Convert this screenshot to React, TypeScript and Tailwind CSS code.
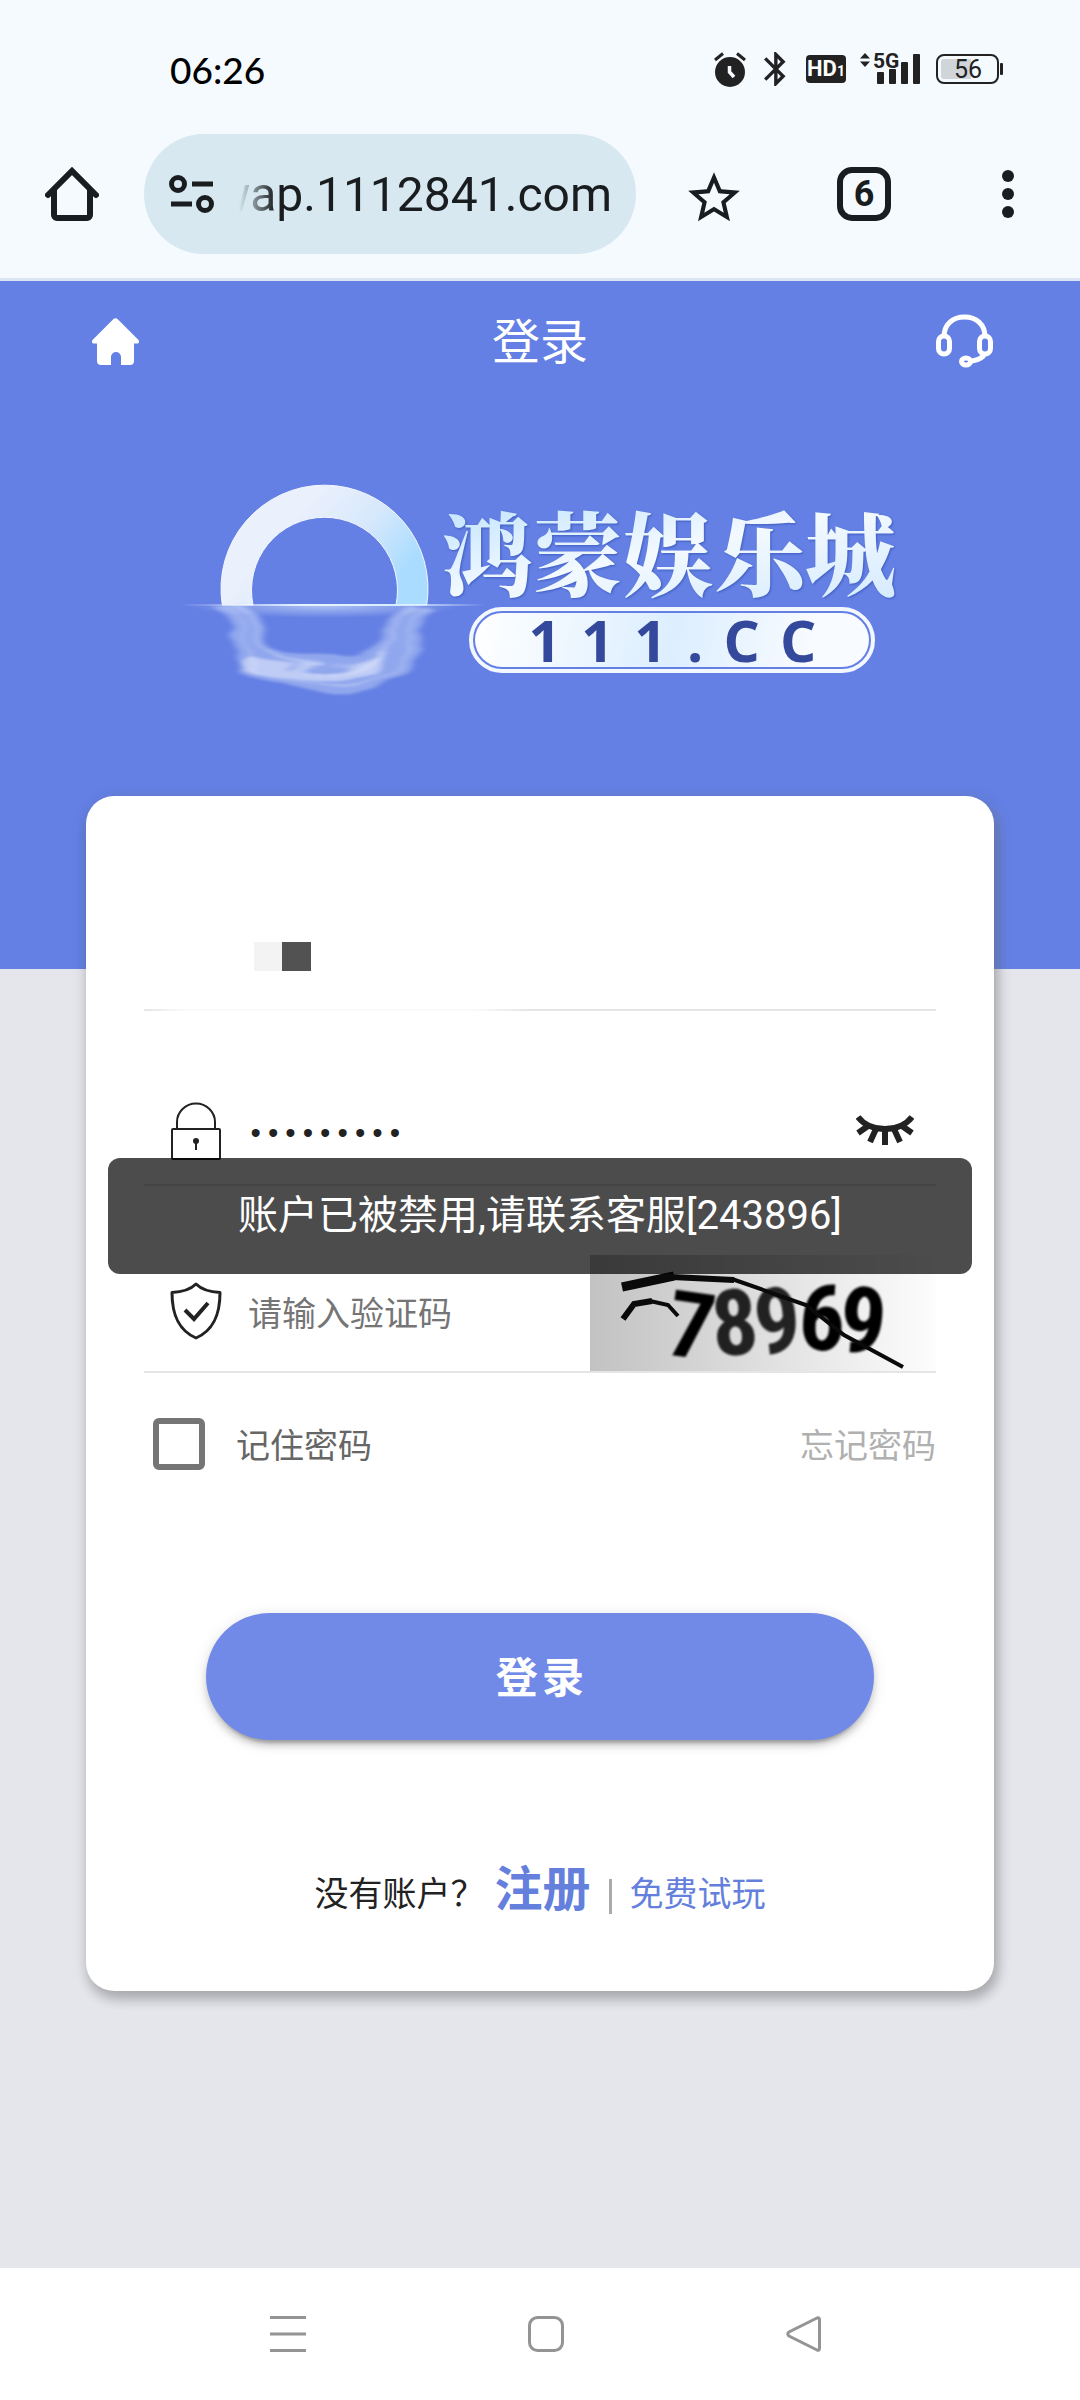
import { useState } from "react";
import { MdStarBorder } from "react-icons/md";

const SIGNAL_BARS = [
  { x: 17, h: 12 },
  { x: 29, h: 15 },
  { x: 41, h: 22 },
  { x: 53, h: 30 },
];

function StatusBar() {
  return (
    <div className="flex h-[134px] items-center justify-between pt-1 pr-[77px] pl-[170px] text-[#222]">
      <span className="font-['Lato',sans-serif] text-[37px] leading-none font-medium text-black">
        06:26
      </span>
      <div className="flex items-center">
        <svg width="32" height="35" viewBox="0 0 32 35" className="mr-[18px]">
          <circle cx="16" cy="20" r="15" fill="currentColor" />
          <path
            d="M1 8L9 1.500M31 8L23 1.500"
            stroke="currentColor"
            strokeWidth="3"
          />
          <path d="M15.500 14v6l4.500 5" stroke="#f5faff" strokeWidth="3.500" fill="none" />
        </svg>
        <svg width="22" height="34" viewBox="5 2 13 20" className="mr-5">
          <path
            fill="currentColor"
            d="M17.71 7.71L12 2h-1v7.59L6.410 5 5 6.410 10.590 12 5 17.590 6.410 19 11 14.410V22h1l5.710-5.710-4.300-4.290 4.300-4.290zM13 5.830l1.880 1.880L13 9.590V5.830zm1.880 10.460L13 18.170v-3.760l1.880 1.880z"
          />
        </svg>
        <span className="mr-3.5 flex h-7 w-10 items-baseline justify-center rounded-sm bg-[#222] font-['Liberation_Sans_Narrow','Roboto',sans-serif] text-[22px] leading-7 font-bold text-white">
          HD<span className="text-sm leading-none">1</span>
        </span>
        <svg width="61" height="38" viewBox="0 -4 61 38" className="mr-[15px] mb-1">
          <path d="M0 6.500L5 1l5 5.500zM0 9.500h10L5 15z" fill="currentColor" />
          <text
            x="13"
            y="16"
            fontSize="21"
            className="fill-current font-['Liberation_Sans_Narrow','Roboto'] font-bold"
          >
            5G
          </text>
          {SIGNAL_BARS.map((bar) => (
            <rect
              key={bar.x}
              x={bar.x}
              y={32 - bar.h}
              width="7"
              height={bar.h}
              rx="1"
              fill="currentColor"
            />
          ))}
        </svg>
        <svg width="67" height="30" viewBox="0 0 67 30">
          <rect x="1" y="1" width="61" height="28" rx="7" fill="none" stroke="currentColor" strokeWidth="2" />
          <path d="M35 5H8a3 3 0 0 0-3 3v14a3 3 0 0 0 3 3h27z" fill="#d0d5d9" />
          <rect x="64" y="9" width="3" height="12" rx="1" fill="currentColor" />
          <text x="32" y="24" fontSize="25" textAnchor="middle" className="fill-current font-['Roboto']">
            56
          </text>
        </svg>
      </div>
    </div>
  );
}

function BrowserBar() {
  return (
    <div className="flex items-center border-b-3 border-[#dbe4f4] pb-6 text-[#191d20]">
      <button aria-label="主页" className="flex w-36 shrink-0 justify-center">
        <svg width="54" height="54" viewBox="0 0 54 54" fill="none" stroke="currentColor" strokeWidth="6">
          <path d="M3 28L27 4l24 24" strokeLinecap="round" />
          <path d="M9 22v26a3 3 0 0 0 3 3h30a3 3 0 0 0 3-3V22" />
        </svg>
      </button>
      <div className="flex h-[120px] min-w-0 flex-1 items-center rounded-full bg-[#d7e8f0] pr-6 pl-[25px]">
        <svg
          width="46"
          height="40"
          viewBox="0 0 46 40"
          fill="none"
          stroke="currentColor"
          strokeWidth="5"
          className="shrink-0"
        >
          <circle cx="9" cy="10" r="6.500" />
          <path d="M23 10h21M2 30h21" />
          <circle cx="36" cy="30" r="6.500" />
        </svg>
        <div className="ml-6 flex min-w-0 flex-1 justify-end overflow-hidden pt-0.5 mask-[linear-gradient(to_right,transparent,black_36px)]">
          <span className="font-['Roboto',sans-serif] text-[48px] leading-[60px] whitespace-nowrap">
            wap.1112841.com
          </span>
        </div>
      </div>
      <button aria-label="收藏" className="flex w-[156px] shrink-0 justify-center pt-2">
        <MdStarBorder size={62} />
      </button>
      <button aria-label="标签页" className="flex w-36 shrink-0 justify-center">
        <span className="flex size-[54px] items-center justify-center rounded-[15px] border-6 border-current font-['Roboto',sans-serif] text-4xl leading-none font-bold">
          6
        </span>
      </button>
      <button aria-label="更多" className="flex w-36 shrink-0 flex-col items-center gap-1.5">
        <span className="size-3 rounded-full bg-current" />
        <span className="size-3 rounded-full bg-current" />
        <span className="size-3 rounded-full bg-current" />
      </button>
    </div>
  );
}

function Logo() {
  return (
    <div className="flex items-start justify-center pr-1">
      <svg width="305" height="220" viewBox="180 480 305 220" className="shrink-0">
        <defs>
          <linearGradient id="ring" x1="0" y1="0" x2="1" y2="0.500">
            <stop offset="0.400" stopColor="#eaf0fc" />
            <stop offset="0.700" stopColor="#d6e8fc" />
            <stop offset="1" stopColor="#a9dcff" />
          </linearGradient>
          <linearGradient id="waterline">
            <stop offset="0" stopColor="#fff" stopOpacity="0" />
            <stop offset="0.400" stopColor="#e8f4ff" />
            <stop offset="0.700" stopColor="#d6efff" />
            <stop offset="1" stopColor="#fff" stopOpacity="0" />
          </linearGradient>
          <radialGradient id="glow" cx="0.500" cy="0" r="0.500" gradientTransform="translate(0 0) scale(1 2)">
            <stop offset="0" stopColor="#dcebff" stopOpacity="0.600" />
            <stop offset="1" stopColor="#dcebff" stopOpacity="0" />
          </radialGradient>
          <filter id="ripple" x="-20%" y="-20%" width="140%" height="140%">
            <feTurbulence type="fractalNoise" baseFrequency="0.006 0.045" numOctaves="2" seed="7" />
            <feDisplacementMap in="SourceGraphic" scale="32" xChannelSelector="R" yChannelSelector="A" />
            <feGaussianBlur stdDeviation="3 1" />
          </filter>
        </defs>
        <path
          d="M222.300 604A103.500 103.500 0 1 1 426.700 604H396A73 73 0 1 0 253 604Z"
          fill="url(#ring)"
          stroke="#f4f8ff"
          strokeWidth="1"
        />
        <g filter="url(#ripple)" fill="none">
          <path d="M238 608C241 645 250 674 322 676S404 645 411 608" stroke="#bccdf7" strokeWidth="32" opacity="0.500" />
          <path d="M246 608C250 640 262 666 322 668S400 640 404 608" stroke="#e3ebfd" strokeWidth="2" opacity="0.500" />
          <path d="M234 608C237 650 246 680 322 684S408 650 418 608" stroke="#e3ebfd" strokeWidth="2" opacity="0.400" />
          <path d="M244 660C280 676 340 680 378 660" stroke="#edf2fe" strokeWidth="12" opacity="0.500" />
        </g>
        <rect x="190" y="605" width="270" height="12" fill="url(#glow)" />
        <rect x="180" y="603" width="305" height="2" fill="url(#waterline)" />
      </svg>
      <div className="mt-5 -ml-11 flex flex-col items-center">
        <h1 className="bg-linear-to-br from-[#bfe3ff] via-[#f3f9ff] to-[#d5ebff] bg-clip-text font-['Noto_Serif_CJK_SC','Noto_Sans_CJK_SC',serif] text-[91px] leading-[98px] font-black text-transparent drop-shadow-[1px_1px_1px_#3f5cc0]">
          鸿蒙娱乐城
        </h1>
        <div className="mt-2 ml-2 flex h-[66px] w-[406px] items-center rounded-full border-4 border-[#f3f8ff] p-0.5">
          <div className="flex h-full w-full items-center justify-between rounded-full bg-[linear-gradient(100deg,#fff,#dceeff_50%,#f8fbff_85%)] px-[53px] font-['Open_Sans',sans-serif] text-[57px] leading-none font-bold text-[#34489c]">
            {"111.CC".split("").map((char, i) => (
              <span key={i}>{char}</span>
            ))}
          </div>
        </div>
      </div>
    </div>
  );
}

function Hero() {
  return (
    <header className="bg-[#6480e4] pb-[268px] text-white">
      <div className="flex h-[120px] items-center justify-between px-[87px]">
        <a href="#home" aria-label="首页" className="flex w-[57px] justify-center">
          <svg width="47" height="47" viewBox="0 0 47 47">
            <path
              fill="currentColor"
              d="M21 1.500a3.500 3.500 0 0 1 5 0L46 21.500c2 2 1 4-1 4h-3V43a4 4 0 0 1-4 4H29V39a4.500 4.500 0 0 0-10 0v8H9a4 4 0 0 1-4-4V25.500H2c-2 0-3-2-1-4z"
            />
          </svg>
        </a>
        <span className="pt-1 text-5xl leading-none">登录</span>
        <a href="#service" aria-label="客服">
          <svg width="57" height="54" viewBox="0 0 57 54" fill="none" stroke="currentColor" strokeWidth="5">
            <path d="M8 23C8 10 17 3 28.500 3S49 10 49 23" />
            <rect x="2.500" y="22" width="11" height="18" rx="5.500" />
            <rect x="43.500" y="22" width="11" height="18" rx="5.500" />
            <path d="M49 39c-2 5-6 7-13 8" />
            <ellipse cx="30" cy="47.500" rx="4.500" ry="3.500" />
          </svg>
        </a>
      </div>
      <div className="pt-20">
        <Logo />
      </div>
    </header>
  );
}

function Captcha() {
  return (
    <svg
      width="346"
      height="116"
      viewBox="0 0 346 116"
      role="img"
      aria-label="验证码"
      className="shrink-0 bg-linear-to-r from-[#c2c2c2] to-[#fdfdfd]"
    >
      <filter id="soft">
        <feGaussianBlur stdDeviation="1" />
      </filter>
      <g
        filter="url(#soft)"
        fontSize="92"
        className="fill-black font-['Liberation_Sans_Narrow','Roboto_Condensed','Roboto'] font-bold"
      >
        <text x="78" y="102" transform="rotate(8 98 70)">7</text>
        <text x="121" y="100" transform="rotate(-5 144 65)" opacity="0.850">8</text>
        <text x="164" y="98" transform="rotate(-6 188 65)" opacity="0.850">9</text>
        <text x="209" y="95" transform="rotate(3 234 62)">6</text>
        <text x="250" y="98" transform="rotate(5 276 66)">9</text>
      </g>
      <g fill="none" stroke="#0a0a0a">
        <path d="M32 32L84 21" strokeWidth="9" />
        <path d="M82 22l62 3" strokeWidth="6" />
        <path d="M142 24l74 26 38 30 59 32" strokeWidth="4" />
        <path d="M33 64l11-15 18-3" strokeWidth="6" />
        <path d="M60 46l18 4 10 11" strokeWidth="4" />
      </g>
    </svg>
  );
}

function LoginCard() {
  const [password, setPassword] = useState("abc123456");
  const [showPassword, setShowPassword] = useState(false);
  const [captcha, setCaptcha] = useState("");
  const [remember, setRemember] = useState(false);

  return (
    <form
      onSubmit={(e) => e.preventDefault()}
      className="mx-[86px] -mt-[173px] rounded-[28px] bg-white px-[58px] pt-[111px] pb-[65px] text-[34px] leading-10 text-[#222] shadow-[4px_5px_12px_rgba(140,140,140,0.4),2px_9px_12px_rgba(0,0,0,0.14),2px_3px_20px_rgba(0,0,0,0.08)]"
    >
      {/* account name is masked */}
      <div>
        <div className="flex h-[102px] items-center pb-1 pl-[110px]">
          <span className="h-[29px] w-7 shrink-0 bg-[#f3f3f3]" />
          <span className="h-[29px] w-[29px] shrink-0 bg-[#525252]" />
          <input type="text" aria-label="用户名" className="h-full min-w-0 flex-1 outline-none" />
        </div>
        <div className="h-0.5 bg-[linear-gradient(to_right,#e5e5e5,#fafafa_40px,#fafafa_330px,#e5e5e5_385px)]" />
      </div>

      <div className="relative mt-[71px] flex h-[104px] items-center border-b-2 border-[#e5e5e5] pr-[22px] pl-[27px]">
        <svg width="50" height="58" viewBox="0 0 50 58" fill="none" stroke="currentColor" className="mb-1 shrink-0">
          <path d="M6 27V20a19 18.500 0 0 1 38 0v7" strokeWidth="2" />
          <rect x="1" y="27" width="48" height="30" rx="1" strokeWidth="2" />
          <circle cx="25" cy="39" r="3" fill="currentColor" stroke="none" />
          <path d="M25 40v8" strokeWidth="2" />
        </svg>
        <input
          type={showPassword ? "text" : "password"}
          aria-label="密码"
          value={password}
          onChange={(e) => setPassword(e.target.value)}
          className="ml-[26px] h-full min-w-0 flex-1 pt-1 font-['Liberation_Mono',monospace] text-[29px] outline-none"
        />
        <button
          type="button"
          aria-label="显示密码"
          onClick={() => setShowPassword(!showPassword)}
          className="mb-1.5 shrink-0"
        >
          <svg width="58" height="30" viewBox="0 0 58 30" fill="none" stroke="currentColor" strokeWidth="6">
            <path d="M2 2C14 18 44 18 56 2" />
            <path d="M12 11l-10 7M20 14l-6 13M29 15v15M38 14l6 13M46 11l10 7" />
          </svg>
        </button>
        <div
          role="alert"
          className="absolute -inset-x-9 top-[76px] z-10 rounded-xl bg-black/70 py-7 text-center text-[40px] leading-[60px] text-white"
        >
          账户已被禁用,请联系客服[243896]
        </div>
      </div>

      <div className="mt-[69px] flex items-center border-b-2 border-[#e5e5e5] pl-[26px]">
        <svg
          width="52"
          height="58"
          viewBox="0 0 52 58"
          fill="none"
          stroke="currentColor"
          strokeWidth="3"
          className="mb-1 shrink-0"
        >
          <path
            d="M26 2C20 8 12 10 2 10.500C2 32 8 48 26 56C44 48 50 32 50 10.500C40 10 32 8 26 2Z"
            strokeLinejoin="round"
          />
          <path d="M15 28l9 9 14-16" strokeWidth="4" />
        </svg>
        <input
          type="text"
          aria-label="验证码"
          placeholder="请输入验证码"
          value={captcha}
          onChange={(e) => setCaptcha(e.target.value)}
          className="ml-[26px] min-w-0 flex-1 pt-0.5 placeholder-[#757575] outline-none"
        />
        <Captcha />
      </div>

      <div className="mt-[45px] flex items-center justify-between pl-[9px]">
        <label className="flex items-center text-[#666]">
          <input
            type="checkbox"
            checked={remember}
            onChange={(e) => setRemember(e.target.checked)}
            className="mr-[31px] size-[52px] appearance-none rounded-md border-6 border-[#757575] checked:bg-[#718ae7]"
          />
          <span className="pt-1">记住密码</span>
        </label>
        <a href="#forgot" className="pt-1 text-[#b0b0b0]">
          忘记密码
        </a>
      </div>

      <div className="mt-[143px] px-[62px]">
        <button
          type="submit"
          className="h-[127px] w-full rounded-full bg-[#718ae7] pt-1 pl-1 text-[42px] font-semibold tracking-widest text-white shadow-[0_9px_3px_-6px_rgba(0,0,0,0.2),0_6px_6px_rgba(0,0,0,0.14),0_3px_15px_rgba(0,0,0,0.12)]"
        >
          登录
        </button>
      </div>

      <div className="mt-[114px] flex h-[72px] items-baseline justify-center">
        <span>没有账户？</span>
        <a href="#register" className="ml-2.5 text-5xl leading-[72px] font-bold text-[#6480dc]">
          注册
        </a>
        <span className="mx-[18px] mt-3 h-[35px] w-[3px] self-center bg-[#aaa]" />
        <a href="#trial" className="text-[#6480dc]">
          免费试玩
        </a>
      </div>
    </form>
  );
}

function NavBar() {
  return (
    <nav className="flex h-[132px] items-center justify-center gap-[222px] bg-white pl-3 text-[#949494]">
      <button aria-label="菜单">
        <svg width="36" height="36" viewBox="0 0 36 36" stroke="currentColor" strokeWidth="3">
          <path d="M0 1.500h36M0 18h36M0 34.500h36" />
        </svg>
      </button>
      <button aria-label="主屏幕">
        <svg width="36" height="36" viewBox="0 0 36 36" fill="none" stroke="currentColor" strokeWidth="3">
          <rect x="1.500" y="1.500" width="33" height="33" rx="8" />
        </svg>
      </button>
      <button aria-label="返回">
        <svg width="36" height="36" viewBox="0 0 36 36" fill="none" stroke="currentColor" strokeWidth="3">
          <path d="M31 2L3 16q-2.500 2 0 4L31 34q2.500 1 2.500-2V4q0-3-2.500-2z" />
        </svg>
      </button>
    </nav>
  );
}

export default function App() {
  return (
    <div className="flex min-h-screen flex-col bg-[#e5e6ec] font-['Roboto','Noto_Sans_CJK_SC',sans-serif]">
      <div className="bg-[#f5faff]">
        <StatusBar />
        <BrowserBar />
      </div>
      <main className="flex-1 pb-20">
        <Hero />
        <LoginCard />
      </main>
      <NavBar />
    </div>
  );
}
